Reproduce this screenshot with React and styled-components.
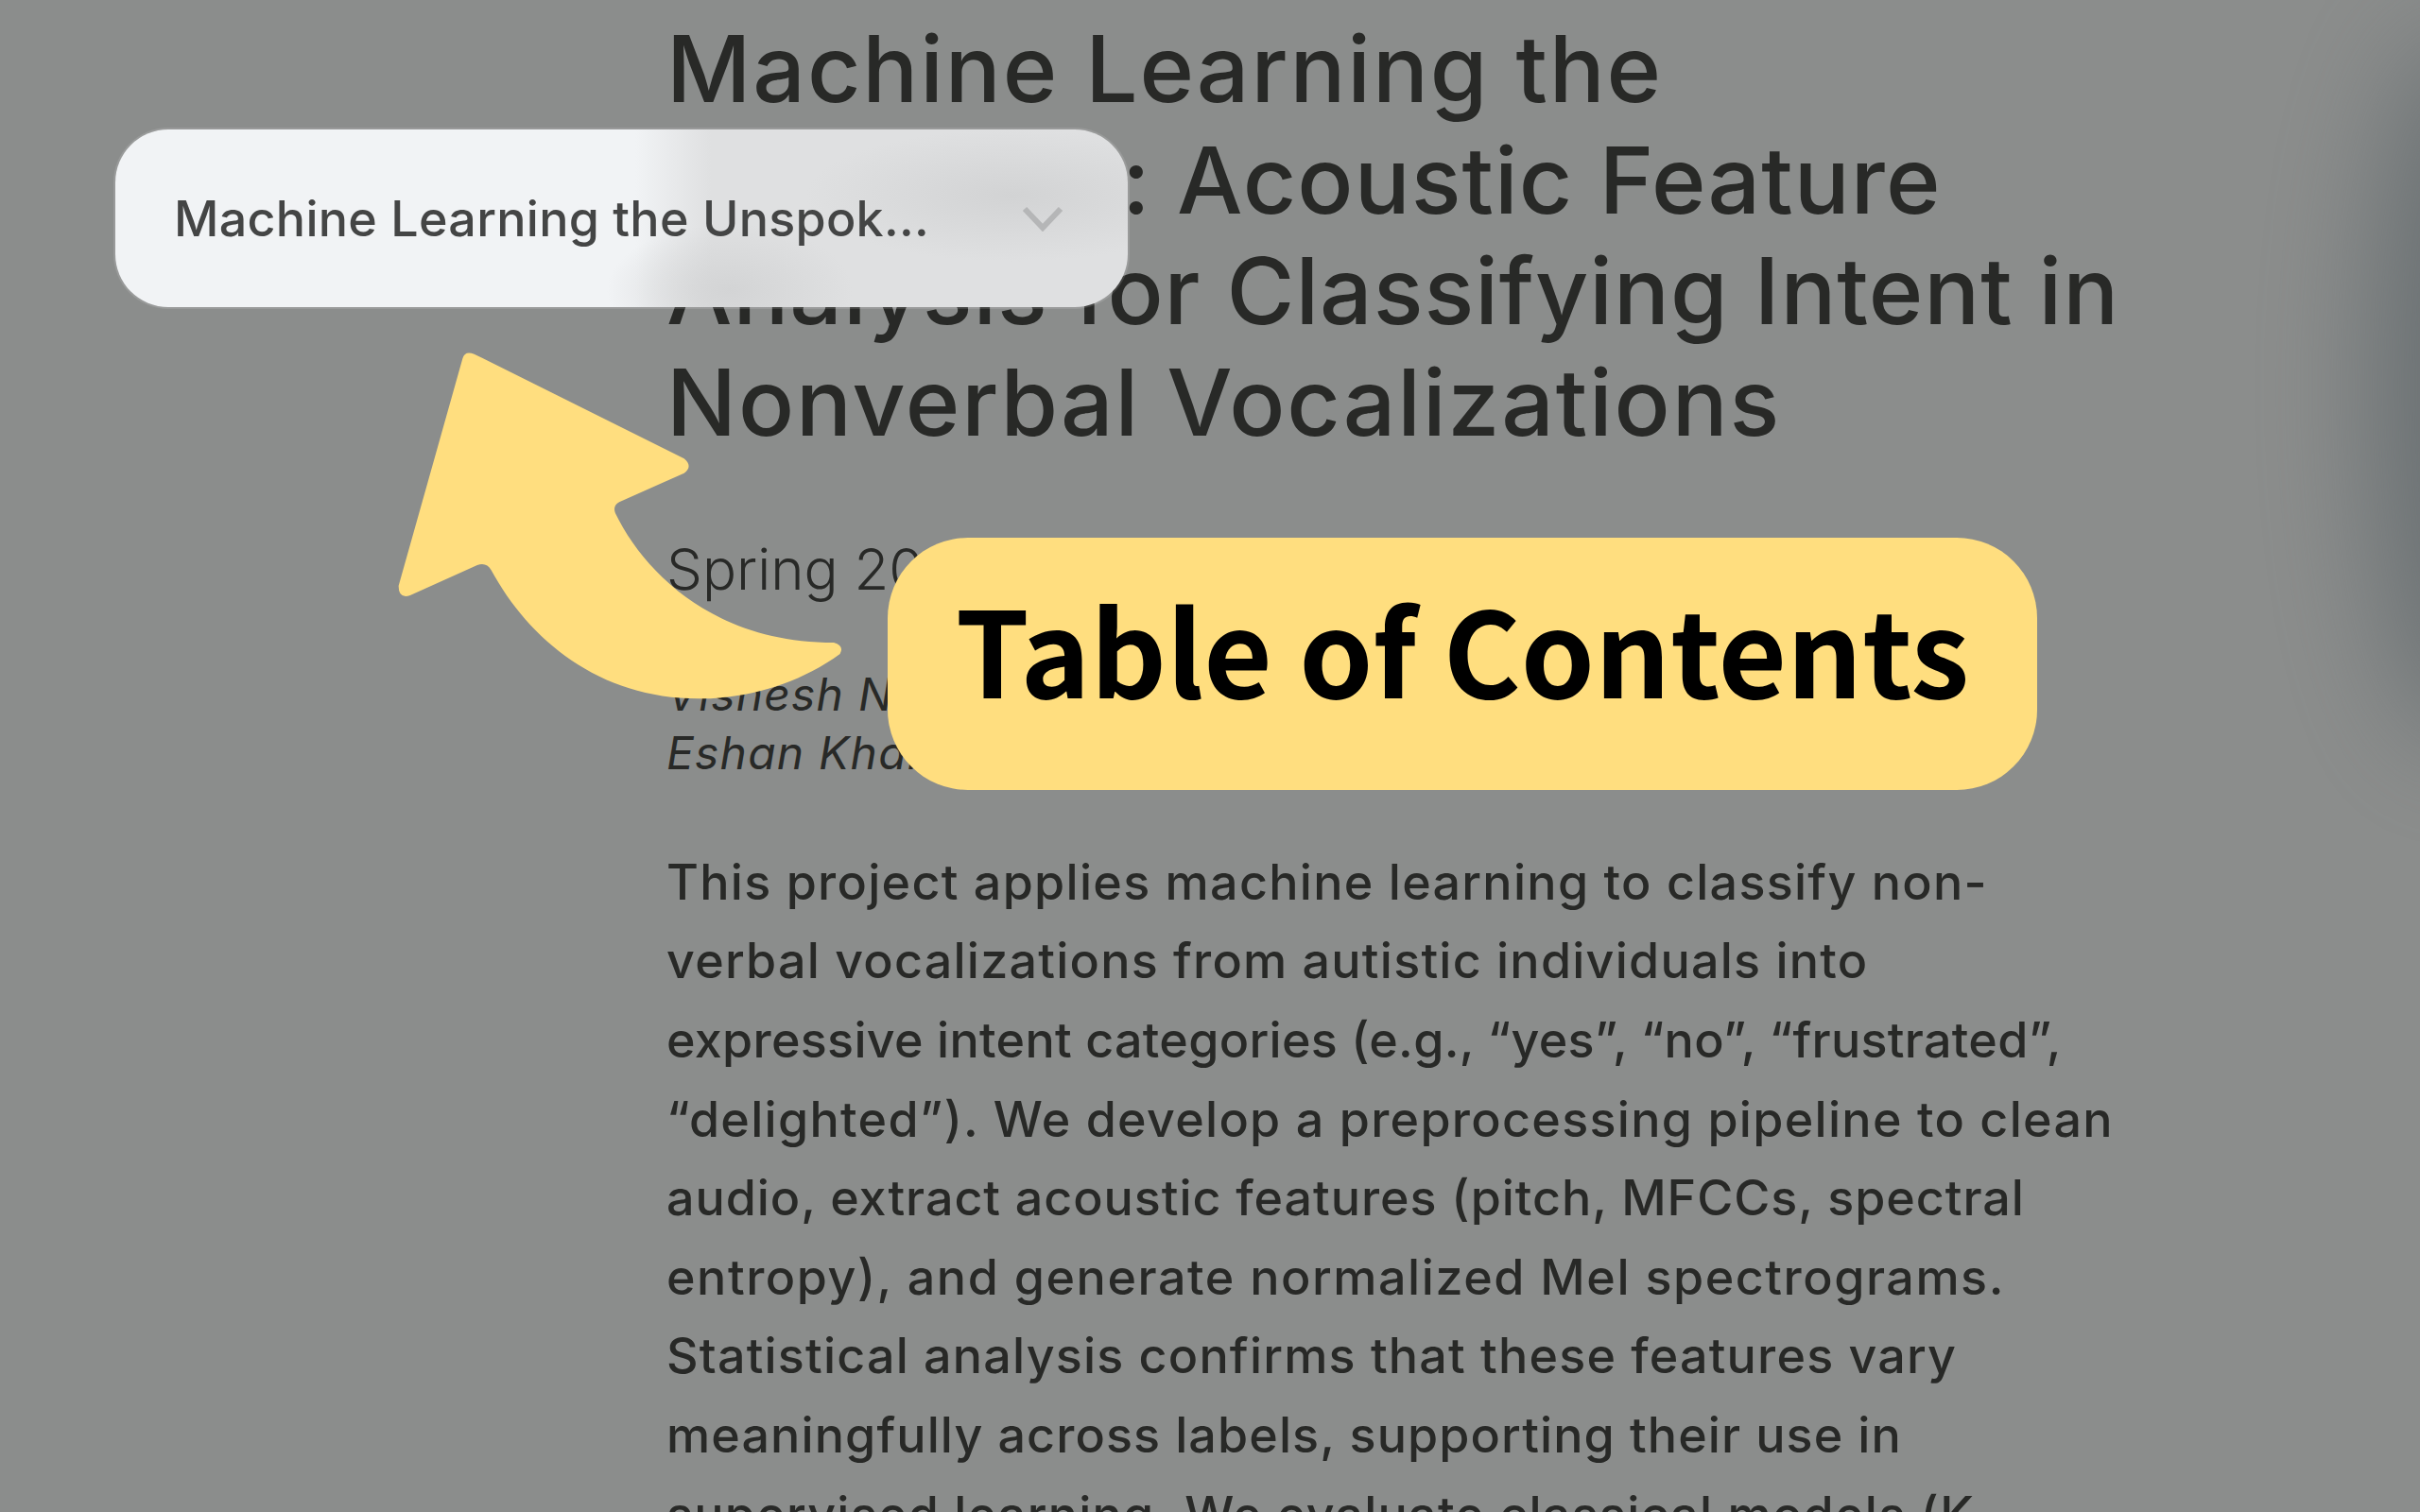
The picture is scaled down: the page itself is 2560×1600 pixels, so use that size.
import React from 'react';
import styled, {createGlobalStyle} from 'styled-components';

const GlobalStyle = createGlobalStyle`
  html, body {
    margin: 0;
    padding: 0;
    background: #8b8d8c;
  }
`;

const Page = styled.main`
  position: relative;
  width: 2560px;
  height: 1600px;
  overflow: hidden;
  background: #8b8d8c;
  font-family: Inter, 'Liberation Sans', sans-serif;
  color: #282927;
`;
const SideShade = styled.div`
  position: absolute;
  top: 30px;
  right: -140px;
  width: 190px;
  height: 760px;
  border-radius: 50%;
  background: #5c6468;
  filter: blur(60px);
  opacity: 0.7;
`;
const Article = styled.article`
  display: flex;
  flex-direction: column;
  width: 1560px;
  margin-left: 705px;
  padding-top: 14px;
`;
const Title = styled.h1`
  margin: 0;
  font-size: 98px;
  font-weight: 500;
  line-height: 117.7px;
`;
const Term = styled.p`
  margin: 71px 0 0;
  font-size: 60px;
  font-weight: 300;
  line-height: 92px;
`;
const Authors = styled.p`
  margin: 56px 0 0;
  font-size: 48px;
  font-style: italic;
  line-height: 62px;
  letter-spacing: 1.2px;
`;
const Abstract = styled.p`
  margin: 64px 0 0;
  font-size: 52px;
  font-weight: 450;
  line-height: 83.6px;
`;
const Line = styled.span`
  display: block;
  letter-spacing: ${p => p.$tracking}px;
  white-space: nowrap;
`;
const Selector = styled.div`
  position: absolute;
  top: 137px;
  left: 122px;
  box-sizing: border-box;
  display: flex;
  align-items: center;
  justify-content: space-between;
  width: 1071px;
  height: 188px;
  padding: 0 68px 0 62px;
  border-radius: 56px;
  box-shadow: 0 0 0 2px rgba(255, 255, 255, 0.12);
  background:
    radial-gradient(220px 70px at 950px 70px, #d2d3d4 0%, rgba(210, 211, 212, 0) 100%),
    radial-gradient(130px 70px at 650px 170px, #d3d4d5 0%, rgba(211, 212, 213, 0) 100%),
    linear-gradient(to right, #f1f3f5 550px, #dfe0e1 630px);
`;
const SelectorLabel = styled.span`
  font-size: 52px;
  font-weight: 450;
  color: #444545;
  letter-spacing: 0.28px;
  white-space: nowrap;
`;
const Chevron = styled.svg`
  display: block;
  width: 44px;
  height: 28px;
`;
const Arrow = styled.svg`
  position: absolute;
  top: 340px;
  left: 380px;
  width: 640px;
  height: 440px;
`;
const Callout = styled.div`
  position: absolute;
  top: 569px;
  left: 939px;
  box-sizing: border-box;
  display: flex;
  align-items: center;
  justify-content: center;
  width: 1216px;
  height: 267px;
  padding-bottom: 36px;
  border-radius: 85px;
  background: #ffde7f;
  color: #000;
  font-family: 'Noto Sans CJK JP', 'Noto Sans', sans-serif;
  font-size: 125px;
  font-weight: 700;
  white-space: nowrap;
`;

const titleLines = [
  ['Machine Learning the', 1.9],
  ['Unspoken: Acoustic Feature', 1.09],
  ['Analysis for Classifying Intent in', 0.97],
  ['Nonverbal Vocalizations', 1.9],
];
const abstractLines = [
  ['This project applies machine learning to classify non-', 1.29],
  ['verbal vocalizations from autistic individuals into', 1.24],
  ['expressive intent categories (e.g., “yes”, “no”, “frustrated”,', 0.31],
  ['“delighted”). We develop a preprocessing pipeline to clean', 1.3],
  ['audio, extract acoustic features (pitch, MFCCs, spectral', 0.95],
  ['entropy), and generate normalized Mel spectrograms.', 1.54],
  ['Statistical analysis confirms that these features vary', 1.2],
  ['meaningfully across labels, supporting their use in', 1.11],
  ['supervised learning. We evaluate classical models (K-', 1.25],
];

const renderLines = lines =>
  lines.map(([text, tracking]) => (
    <Line key={text} $tracking={tracking}>
      {text}
    </Line>
  ));

export default function App() {
  return (
    <Page>
      <GlobalStyle />
      <SideShade />
      <Article>
        <Title>{renderLines(titleLines)}</Title>
        <Term>Spring 2025</Term>
        <Authors>
          Vishesh Narayan
          <br />
          Eshan Khan
        </Authors>
        <Abstract>{renderLines(abstractLines)}</Abstract>
      </Article>
      <Selector>
        <SelectorLabel>Machine Learning the Unspok...</SelectorLabel>
        <Chevron viewBox="0 0 44 28" fill="none">
          <path d="M3 4 L22 24 L41 4" stroke="#b5b6b7" strokeWidth="6" />
        </Chevron>
      </Selector>
      <Arrow viewBox="0 0 1568 1320" preserveAspectRatio="none">
        <path
          fill="#ffde7f"
          d="M268 118 Q274 92 298 104 L842 436 Q866 460 842 482 L674 574 Q656 586 664 610 C740 800 920 1020 1230 1020 Q1258 1030 1246 1056 C1140 1150 1010 1198 880 1198 C620 1198 440 1010 342 790 Q330 764 306 774 L132 870 Q102 882 102 840 Z"
        />
      </Arrow>
      <Callout>Table of Contents</Callout>
    </Page>
  );
}
